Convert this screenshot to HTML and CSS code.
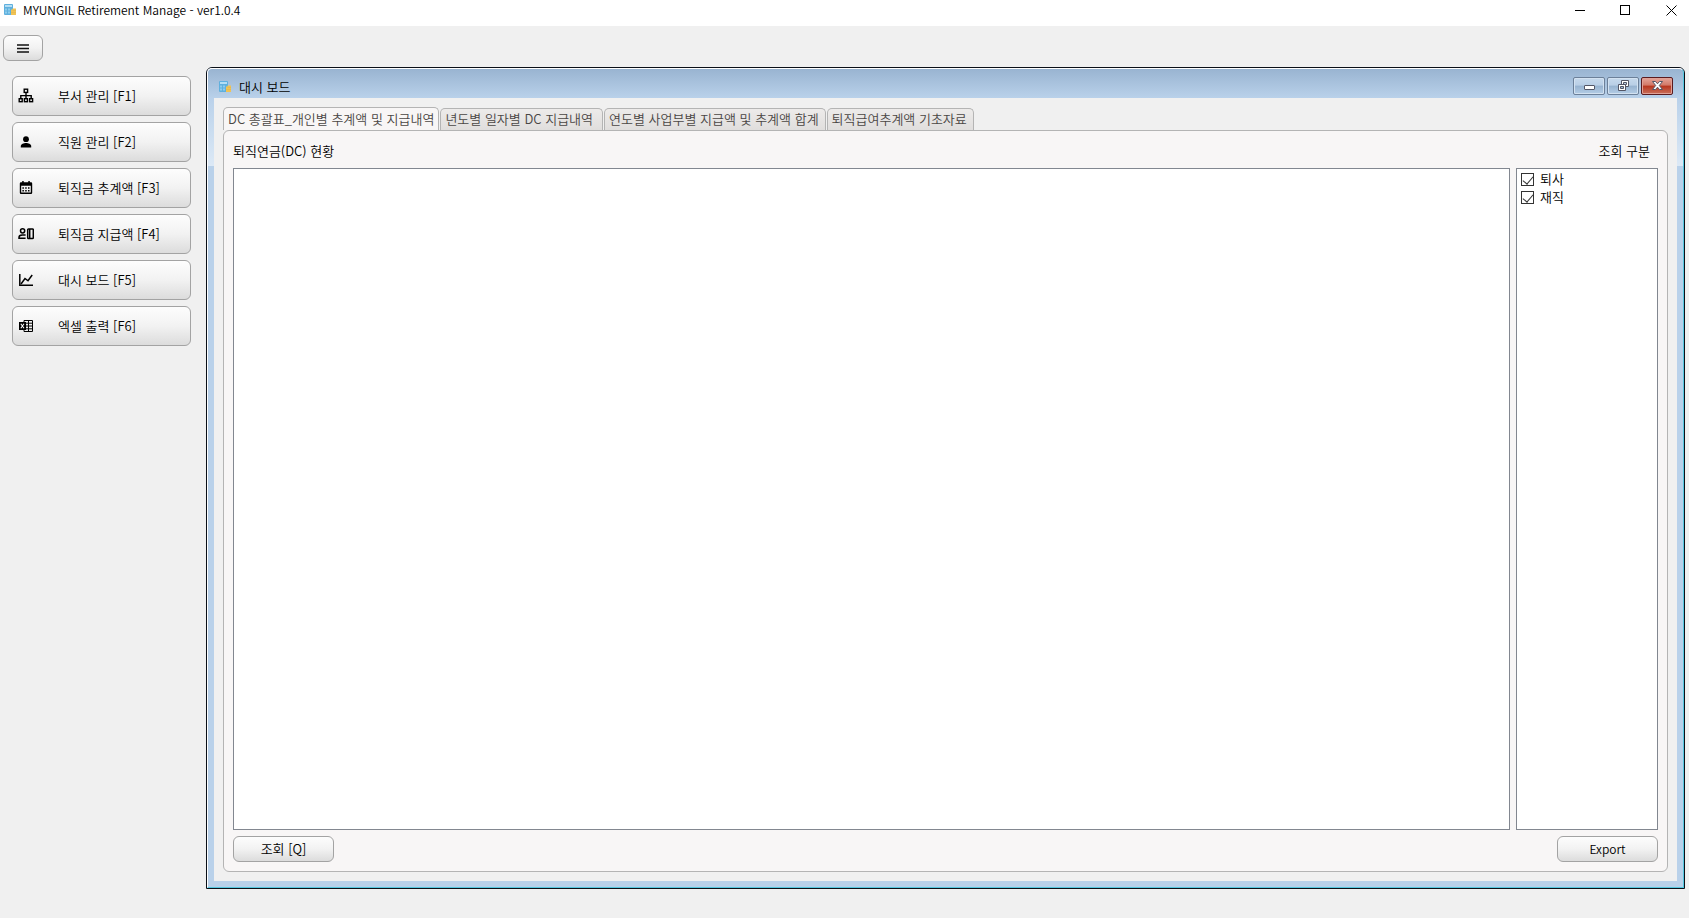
FILE: index.html
```html
<!DOCTYPE html>
<html lang="ko">
<head>
    <meta charset="UTF-8">
    <meta name="viewport" content="width=device-width, initial-scale=1.0">
    <title>MYUNGIL Retirement Manage - ver1.0.4</title>
    <link rel="stylesheet" href="styles.css">
</head>
<body>
    <svg width="0" height="0" class="symbols" aria-hidden="true">
        <symbol id="appIcon" viewBox="0 0 12 12">
            <rect x="0" y="0" width="9" height="11" rx="1" fill="#5fb0de"/>
            <rect x="1" y="1" width="7" height="2" fill="#b4def4"/>
            <path d="M1 4.5h2v2H1zM4 4.5h2v2H4zM1 7.5h2v2H1zM4 7.5h2v2H4z" fill="#8fcdec"/>
            <path d="M7 5.5h1.5v-1H12V11H7z" fill="#f0c356"/>
            <path d="M8.5 6.5H12M7 8.5h5" stroke="#dcae45" stroke-width="0.4"/>
        </symbol>
    </svg>

    <header class="app-bar">
        <svg class="app-icon" width="12" height="12"><use href="#appIcon"/></svg>
        <span class="app-title">MYUNGIL Retirement Manage - ver1.0.4</span>
        <div class="app-controls">
            <button type="button" aria-label="Minimize"><svg width="11" height="11" viewBox="0 0 11 11"><path d="M0 5.5h10" stroke="#000"/></svg></button>
            <button type="button" aria-label="Maximize"><svg width="11" height="11" viewBox="0 0 11 11"><rect x="0.5" y="0.5" width="9" height="9" fill="none" stroke="#000"/></svg></button>
            <button type="button" aria-label="Close"><svg width="11" height="11" viewBox="0 0 11 11"><path d="M0.5 0.5l10 10M10.5 0.5l-10 10" stroke="#000" fill="none"/></svg></button>
        </div>
    </header>

    <div class="toolbar">
        <button type="button" class="btn menu-btn" aria-label="Menu">
            <svg width="12" height="9" viewBox="0 0 12 9"><path d="M0 1h12M0 4.5h12M0 8h12" stroke="#111" stroke-width="1.4"/></svg>
        </button>
    </div>

    <div class="workspace">
        <nav class="sidebar">
            <button type="button" class="btn nav-btn">
                <svg width="16" height="16" viewBox="0 0 16 16" fill="none" stroke="#000" stroke-width="1.4"><rect x="6.2" y="1.2" width="3.4" height="3.2"/><rect x="1.2" y="10.7" width="3" height="3"/><rect x="6.4" y="10.7" width="3" height="3"/><rect x="11.6" y="10.7" width="3" height="3"/><path d="M8 4.5v6M2.8 10.5V7.6h10.4v2.9"/></svg>
                <span>부서 관리 [F1]</span>
            </button>
            <button type="button" class="btn nav-btn">
                <svg width="16" height="16" viewBox="0 0 16 16"><circle cx="8" cy="5.2" r="2.9"/><path d="M2.8 13.5v-1.6c0-1.8 3-2.9 5.2-2.9s5.2 1.1 5.2 2.9v1.6z"/></svg>
                <span>직원 관리 [F2]</span>
            </button>
            <button type="button" class="btn nav-btn">
                <svg width="16" height="16" viewBox="0 0 16 16"><path fill-rule="evenodd" d="M3 2.2h1.2V1h1.5v1.2h4.6V1h1.5v1.2H13a1.2 1.2 0 0 1 1.2 1.2v9.4A1.2 1.2 0 0 1 13 14H3a1.2 1.2 0 0 1-1.2-1.2V3.4A1.2 1.2 0 0 1 3 2.2zM3.2 5.8v6.8h9.6V5.8z"/><path d="M4.4 7.3h1.5v1.4H4.4zM7.2 7.3h1.5v1.4H7.2zM10 7.3h1.5v1.4H10zM4.4 10h1.5v1.4H4.4zM7.2 10h1.5v1.4H7.2zM10 10h1.5v1.4H10z"/></svg>
                <span>퇴직금 추계액 [F3]</span>
            </button>
            <button type="button" class="btn nav-btn">
                <svg width="16" height="16" viewBox="0 0 16 16" fill="none" stroke="#000" stroke-width="1.5"><circle cx="4.6" cy="4.8" r="2.1"/><path d="M7.6 9H4.2C2 9 1 10.2 1 11.4v.9h6.6"/><rect x="9.7" y="2.9" width="5.6" height="9.6" rx="0.8"/><path d="M11.7 3v9.5"/></svg>
                <span>퇴직금 지급액 [F4]</span>
            </button>
            <button type="button" class="btn nav-btn">
                <svg width="16" height="16" viewBox="0 0 16 16" fill="none" stroke="#000" stroke-width="1.5"><path d="M1.8 2v11.2H15"/><path d="M3 12l4-5.5 3 2.3L14.2 3"/></svg>
                <span>대시 보드 [F5]</span>
            </button>
            <button type="button" class="btn nav-btn">
                <svg width="16" height="16" viewBox="0 0 16 16" fill="none" stroke="#000"><path d="M6 2.5h8.5v11H6zM6 5.2h8.5M6 8h8.5M6 10.8h8.5M10.5 2.5v11"/><path d="M1 4h7v8H1z" fill="#000" stroke="none"/><path d="M2.8 5.8l3.2 4.4M6 5.8L2.8 10.2" stroke="#fff" stroke-width="1.1"/></svg>
                <span>엑셀 출력 [F6]</span>
            </button>
        </nav>

        <section class="window">
            <div class="window-frame">
                <div class="window-bar">
                    <svg class="window-icon" width="12" height="12"><use href="#appIcon"/></svg>
                    <h1 class="window-title">대시 보드</h1>
                    <div class="window-controls">
                        <button type="button" aria-label="Minimize window"><svg width="13" height="12" viewBox="0 0 13 12"><rect x="1.5" y="5.5" width="10" height="4" rx="0.5" fill="#fff" stroke="#535666"/></svg></button>
                        <button type="button" aria-label="Restore window"><svg width="13" height="12" viewBox="0 0 13 12" fill="#fff" stroke="#535666" stroke-width="1"><path fill-rule="evenodd" d="M4.5 0.5h7v6h-7zM6.5 2.5v2h3v-2z"/><path fill-rule="evenodd" d="M1.5 4.5h7v6h-7zM3.5 6.5v2h3v-2z"/></svg></button>
                        <button type="button" class="close" aria-label="Close window"><svg width="13" height="12" viewBox="0 0 13 12"><path d="M1.5 1.5h3l2 2.3 2-2.3h3L8.3 5.5l3.2 4h-3l-2-2.3-2 2.3h-3l3.2-4z" fill="#fff" stroke="#535666"/></svg></button>
                    </div>
                </div>

                <div class="window-body">
                    <div class="tabs" role="tablist">
                        <button type="button" class="tab active" role="tab" aria-selected="true">DC 총괄표_개인별 추계액 및 지급내역</button>
                        <button type="button" class="tab wide" role="tab" aria-selected="false">년도별 일자별 DC 지급내역</button>
                        <button type="button" class="tab" role="tab" aria-selected="false">연도별 사업부별 지급액 및 추계액 합계</button>
                        <button type="button" class="tab" role="tab" aria-selected="false">퇴직급여추계액 기초자료</button>
                    </div>

                    <div class="panel" role="tabpanel">
                        <div class="panel-head">
                            <h2>퇴직연금(DC) 현황</h2>
                            <h2>조회 구분</h2>
                        </div>
                        <div class="panel-content">
                            <div class="result-box"></div>
                            <div class="filter-box">
                                <label for="retired"><input type="checkbox" id="retired" checked>퇴사</label>
                                <label for="employed"><input type="checkbox" id="employed" checked>재직</label>
                            </div>
                        </div>
                        <div class="panel-foot">
                            <button type="button" class="btn action-btn">조회 [Q]</button>
                            <button type="button" class="btn action-btn export-btn">Export</button>
                        </div>
                    </div>
                </div>
            </div>
        </section>
    </div>
</body>
</html>
```

FILE: styles.css
```css
* {
    box-sizing: border-box;
}

body {
    margin: 0;
    height: 100vh;
    display: flex;
    flex-direction: column;
    overflow: hidden;
    background-color: #f0f0f0;
    color: #000;
    font-family: "Noto Sans CJK KR", sans-serif;
    font-size: 13px;
    font-weight: 350;
    line-height: 18px;
}

button {
    font: inherit;
    color: inherit;
    padding: 0;
    border: none;
    background: none;
}

h1, h2 {
    margin: 0;
    font-size: 13px;
    font-weight: 350;
}

.symbols {
    position: absolute;
}

/* Application title bar */
.app-bar {
    display: flex;
    align-items: center;
    height: 26px;
    padding: 0 3px 6px 4px;
    background-color: #fff;
}

.app-title,
.export-btn {
    font-size: 12px;
}

.app-title {
    margin-left: 7px;
}

.app-controls {
    display: flex;
    margin-left: auto;
}

.app-controls button {
    display: flex;
    align-items: center;
    justify-content: center;
    width: 45px;
    height: 20px;
}

.app-controls button:last-child {
    width: 30px;
    margin-left: 8px;
}

.toolbar {
    height: 41px;
    padding: 9px 3px 0;
}

/* Buttons */
.btn {
    display: flex;
    align-items: center;
    border: 1px solid #a3a3a3;
    border-radius: 6px;
    background: linear-gradient(#fdfdfd, #f2f2f2 50%, #dcdcdc);
}

.btn:hover {
    background: linear-gradient(#fff, #e6eef6);
}

.menu-btn {
    justify-content: center;
    width: 40px;
    height: 26px;
}

.workspace {
    flex: 1;
    display: flex;
    padding: 0 4px 29px 0;
}

.sidebar {
    display: flex;
    flex-direction: column;
    gap: 6px;
    width: 206px;
    padding: 9px 15px 0 12px;
}

.nav-btn {
    height: 40px;
    padding-left: 5px;
    gap: 24px;
}

/* Child window */
.window {
    flex: 1;
    display: flex;
    border: 1px solid #0b1018;
    border-radius: 6px 6px 0 0;
    background-color: #b9d1ea;
}

.window-frame {
    flex: 1;
    display: flex;
    flex-direction: column;
    padding: 0 6px 6px;
    border: 1px solid #55c8e0;
    border-top-color: #fff;
    border-left-color: #fff;
    border-radius: 5px 5px 0 0;
    background: linear-gradient(#99b4d1, #b9d1ea 29px, #dce9f6 97px, #b9d1ea 97px);
}

.window-bar {
    display: flex;
    align-items: center;
    height: 29px;
    padding: 0 4px 0 5px;
}

.window-icon {
    margin-top: 7px;
}

.window-title {
    margin: 7px 0 0 8px;
}

.window-controls {
    display: flex;
    gap: 2px;
    margin: 4px 0 0 auto;
}

.window-controls button {
    display: flex;
    align-items: center;
    justify-content: center;
    width: 32px;
    height: 18px;
    border: 1px solid #6c8099;
    border-radius: 2px;
    background: linear-gradient(#c6d9ec, #b9cfe6 45%, #97b3d0 50%, #b4cde6);
    box-shadow: inset 0 0 0 1px #d3e2f1;
}

.window-controls .close {
    border-color: #5a1a1e;
    background: linear-gradient(#e4a59b, #d27867 45%, #b7351e 50%, #c9705c);
    box-shadow: inset 0 0 0 1px #e0a096;
}

.window-body {
    flex: 1;
    display: flex;
    flex-direction: column;
    padding: 9px 9px;
    background-color: #f0f0f0;
}

/* Tabs */
.tabs {
    display: flex;
    align-items: flex-end;
    gap: 1px;
}

.tab {
    height: 22px;
    padding: 0 6px 1px 4px;
    border: 1px solid #b4b4b4;
    border-bottom: none;
    border-radius: 5px 5px 0 0;
    background: linear-gradient(#edebea, #e0dedd);
    color: #4a4644;
}

.tab.active {
    height: 23px;
    padding: 0 4px;
    background: #f8f6f6;
}

.tab.wide {
    padding-right: 9px;
}

.panel {
    flex: 1;
    display: flex;
    flex-direction: column;
    padding: 0 9px 9px;
    border: 1px solid #b4b4b4;
    border-radius: 6px;
    background-color: #f8f6f6;
}

.panel-head {
    display: flex;
    align-items: center;
    justify-content: space-between;
    height: 37px;
    padding: 3px 8px 0 0;
}

.panel-content {
    flex: 1;
    display: flex;
    gap: 6px;
}

.result-box,
.filter-box {
    border: 1px solid #828790;
    background-color: #fff;
}

.result-box {
    flex: 1;
}

.filter-box {
    width: 142px;
    padding: 1px 4px;
}

.filter-box label {
    display: flex;
    align-items: center;
    gap: 6px;
    height: 18px;
}

.filter-box input {
    appearance: none;
    display: flex;
    justify-content: center;
    width: 13px;
    height: 13px;
    margin: 0;
    border: 1px solid #333;
    background-color: #fff;
}

.filter-box input:checked::after {
    content: "";
    width: 5px;
    height: 9px;
    border: solid #333;
    border-width: 0 1px 1px 0;
    transform: rotate(40deg);
}

.panel-foot {
    display: flex;
    justify-content: space-between;
    padding-top: 6px;
}

.action-btn {
    justify-content: center;
    width: 101px;
    height: 26px;
}
```
